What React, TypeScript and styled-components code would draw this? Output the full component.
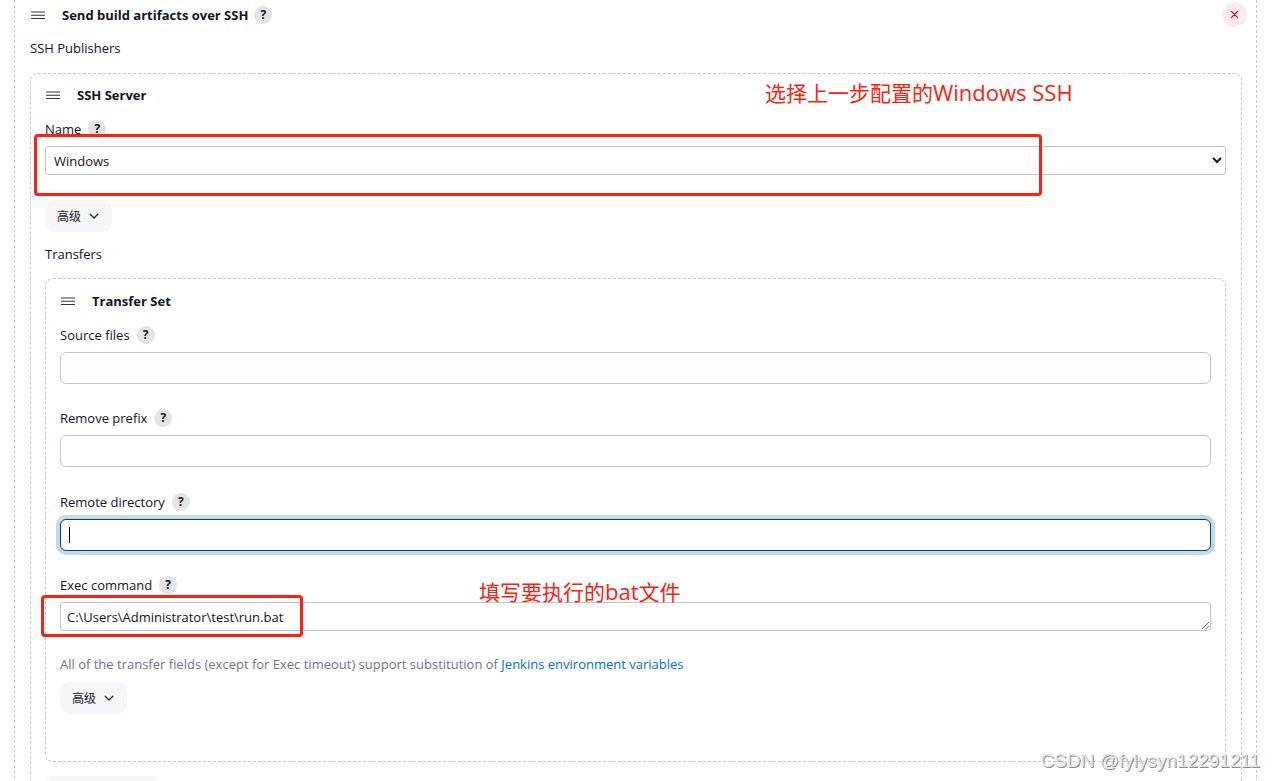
import React from 'react';
import styled, { createGlobalStyle, css } from 'styled-components';

const GlobalStyle = createGlobalStyle`
  *, *::before, *::after { box-sizing: border-box; }
  body {
    margin: 0;
    background: #fff;
    color: #14141f;
    font: 400 13px/20px "Open Sans", "Noto Sans CJK SC", sans-serif;
  }
`;

const Page = styled.main`
  position: relative;
  height: 100vh;
  overflow: hidden;
  padding: 0 20px 0 14px;
`;

const PublisherPanel = styled.section`
  min-height: 100%;
  padding: 5px 14px 40px 15px;
  border: 1px dashed #bfcad0;
  border-width: 0 1px;
`;

const Group = styled.section`
  margin-top: 15px;
  padding: 11px 15px 14px 14px;
  border: 1px dashed #bfc9ce;
  border-radius: 8px;
`;

const TransferGroup = styled(Group)`
  margin-top: 14px;
  padding: 12px 14px 47px;
`;

const Heading = styled.header`
  position: relative;
  display: flex;
  align-items: center;
  height: 20px;
`;

const Title = styled.h2`
  margin: 0 6px 0 16px;
  font-size: 13px;
  line-height: 20px;
  font-weight: 700;
`;

const SectionLabel = styled.div<{ $gap?: number }>`
  margin-top: ${(p) => p.$gap ?? 12}px;
  height: 20px;
`;

const Field = styled.div<{ $gap?: number }>`
  margin-top: ${(p) => p.$gap ?? 24}px;
`;

const LabelRow = styled.div`
  display: flex;
  align-items: center;
  gap: 7px;
  height: 20px;
  margin-bottom: 7px;
`;

const HelpButton = styled.button`
  width: 18px;
  height: 18px;
  padding: 0;
  border: 0;
  border-radius: 50%;
  background: #e4e4e4;
  color: #14141f;
  font: 700 12px/18px "Open Sans", sans-serif;
  text-align: center;
`;

const RemoveButton = styled.button`
  position: absolute;
  top: -3px;
  right: -5px;
  display: grid;
  place-items: center;
  width: 25px;
  height: 25px;
  padding: 0;
  border: 0;
  border-radius: 50%;
  background: #fdebed;
  color: #e6102f;
`;

const ControlWrap = styled.div`
  position: relative;
  display: flex;
`;

const controlStyle = css`
  display: block;
  width: 100%;
  border: 1px solid #bdc9cf;
  background: #fff;
  color: #14141f;
  font: inherit;
  outline: 0;
`;

const Select = styled.select`
  ${controlStyle}
  height: 29px;
  padding: 0 4px;
  border-radius: 3px;
`;

const TextInput = styled.input<{ $active?: boolean }>`
  ${controlStyle}
  height: 32px;
  padding: 0 8px;
  border-radius: 6px;
  ${(p) =>
    p.$active &&
    css`
      border-color: #0b4263;
      box-shadow: 0 0 0 4px #c3dae7;
    `}
`;

const Caret = styled.span`
  position: absolute;
  left: 9px;
  top: 8px;
  width: 1px;
  height: 16px;
  background: #000;
`;

const TextArea = styled.textarea`
  ${controlStyle}
  height: 29px;
  padding: 4px 6px;
  border-radius: 3px;
  overflow: hidden;
  resize: vertical;
`;

const AdvancedButton = styled.button`
  display: flex;
  align-items: center;
  gap: 7px;
  height: 32px;
  padding: 0 12px;
  border: 0;
  border-radius: 10px;
  background: #f7f7f9;
  color: #14141f;
  font: 400 12px/20px "Noto Sans CJK SC", sans-serif;
`;

const SelectAdvanced = styled(AdvancedButton)`
  margin-top: 25px;
`;

const TransferAdvanced = styled(AdvancedButton)`
  margin-top: 8px;
`;

const AddButton = styled(AdvancedButton)`
  width: 115px;
  margin-top: 14px;
`;

const Description = styled.p`
  margin: 23px 0 0;
  color: #73738c;
`;

const Link = styled.a`
  color: #006fe0;
  text-decoration: none;
`;

const Highlight = styled.div<{ $wide?: boolean }>`
  position: absolute;
  border: 3px solid #ff2010;
  border-radius: 4px;
  pointer-events: none;
  ${(p) =>
    p.$wide
      ? css`
          top: -12px;
          left: -11px;
          right: 184px;
          height: 62px;
        `
      : css`
          top: -7px;
          left: -19px;
          width: 262px;
          height: 42px;
        `}
`;

const Note = styled.span<{ $left: number; $top: number }>`
  position: absolute;
  left: ${(p) => p.$left}px;
  top: ${(p) => p.$top}px;
  color: #ff2010;
  font: 400 21px/30px "Open Sans", "Noto Sans CJK SC", sans-serif;
  white-space: nowrap;
  pointer-events: none;
`;

const Latin = styled.span`
  font-size: 22px;
`;

const Watermark = styled.span`
  position: absolute;
  right: 17px;
  bottom: 8px;
  color: #e6e6e6;
  font: 400 19px/24px "Liberation Sans", sans-serif;
  text-shadow: 1px 1px 0 #8c8c8c;
`;

const Grip = () => (
  <svg width="16" height="10" viewBox="0 0 16 10" aria-hidden="true">
    <path d="M1.5 2h13M1.5 5.25h13M1.5 8.5h13" stroke="#34343e" strokeWidth="1.2" strokeLinecap="round" />
  </svg>
);

const Chevron = () => (
  <svg width="12" height="12" viewBox="0 0 12 12" fill="none" aria-hidden="true">
    <path d="M2.2 4.2 6 8l3.8-3.8" stroke="#22222c" strokeWidth="1.3" strokeLinecap="round" strokeLinejoin="round" />
  </svg>
);

const Help = ({ topic }: { topic: string }) => (
  <HelpButton type="button" aria-label={`Help for ${topic}`}>?</HelpButton>
);

const FieldLabel = ({ id, text }: { id: string; text: string }) => (
  <LabelRow>
    <label htmlFor={id}>{text}</label>
    <Help topic={text} />
  </LabelRow>
);

export default function App() {
  return (
    <>
      <GlobalStyle />
      <Page>
        <PublisherPanel>
          <Heading>
            <Grip />
            <Title>Send build artifacts over SSH</Title>
            <Help topic="Send build artifacts over SSH" />
            <RemoveButton type="button" aria-label="Remove">
              <svg width="9" height="9" viewBox="0 0 9 9" aria-hidden="true">
                <path d="m1.5 1.5 6 6m0-6-6 6" stroke="currentColor" strokeWidth="1.2" strokeLinecap="round" />
              </svg>
            </RemoveButton>
          </Heading>
          <SectionLabel $gap={13}>SSH Publishers</SectionLabel>
          <Group>
            <Heading>
              <Grip />
              <Title>SSH Server</Title>
            </Heading>
            <Field $gap={14}>
              <FieldLabel id="server" text="Name" />
              <ControlWrap>
                <Select id="server" defaultValue="Windows">
                  <option>Windows</option>
                </Select>
                <Highlight $wide />
                <Note $left={720} $top={-69}>选择上一步配置的<Latin>Windows SSH</Latin></Note>
              </ControlWrap>
            </Field>
            <SelectAdvanced type="button">高级<Chevron /></SelectAdvanced>
            <SectionLabel>Transfers</SectionLabel>
            <TransferGroup>
              <Heading>
                <Grip />
                <Title>Transfer Set</Title>
              </Heading>
              <Field $gap={14}>
                <FieldLabel id="source" text="Source files" />
                <TextInput id="source" type="text" />
              </Field>
              <Field>
                <FieldLabel id="prefix" text="Remove prefix" />
                <TextInput id="prefix" type="text" />
              </Field>
              <Field $gap={25}>
                <FieldLabel id="directory" text="Remote directory" />
                <ControlWrap>
                  <TextInput id="directory" type="text" $active />
                  <Caret />
                </ControlWrap>
              </Field>
              <Field>
                <FieldLabel id="command" text="Exec command" />
                <ControlWrap>
                  <TextArea id="command" rows={1} defaultValue="C:\Users\Administrator\test\run.bat" />
                  <Highlight />
                  <Note $left={419} $top={-26}>填写要执行的<Latin>bat</Latin>文件</Note>
                </ControlWrap>
              </Field>
              <Description>
                All of the transfer fields (except for Exec timeout) support substitution of{' '}
                <Link href="#variables">Jenkins environment variables</Link>
              </Description>
              <TransferAdvanced type="button">高级<Chevron /></TransferAdvanced>
            </TransferGroup>
            <AddButton type="button" aria-label="Add" />
          </Group>
        </PublisherPanel>
        <Watermark>CSDN @fylysyn12291211</Watermark>
      </Page>
    </>
  );
}
